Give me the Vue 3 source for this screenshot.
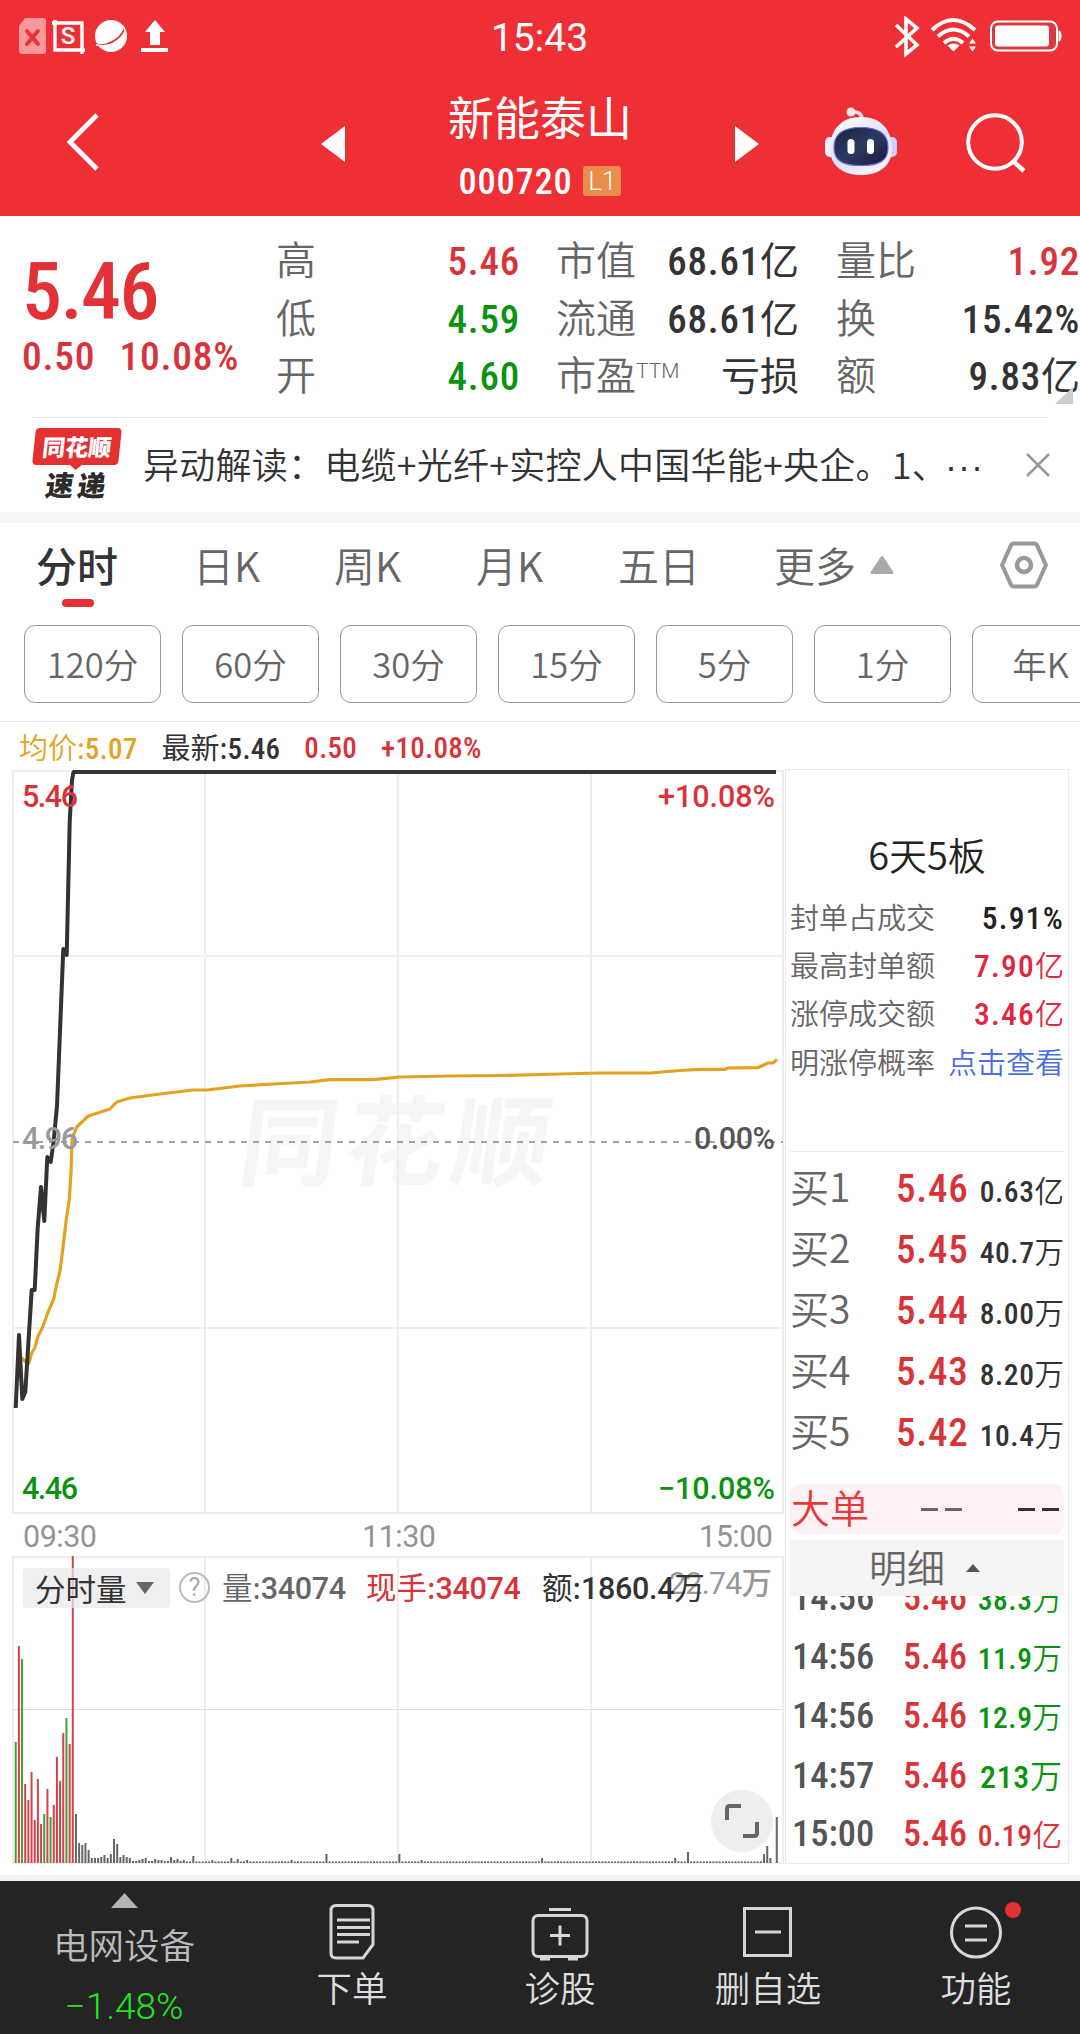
<template>
  <div class="page">
    <header class="header">
      <div class="status-bar">
        <svg class="status-left" width="160" height="44" viewBox="0 0 160 44">
          <path d="M8 2h18a3 3 0 0 1 3 3v30a3 3 0 0 1-3 3H5a3 3 0 0 1-3-3V10z" fill="#f9989b" />
          <path d="M10 15l11 13M21 15L10 28" stroke="#ec3138" stroke-width="4" stroke-linecap="round" />
          <path d="M35 7h30v31M38 4v30h30" fill="none" stroke="#fff" stroke-width="3.400" />
          <text x="51" y="28" class="status-s">S</text>
          <circle cx="94" cy="20" r="16" fill="#fff" />
          <path d="M79 28c7 4 24-3 29-16" fill="none" stroke="#ef2f36" stroke-width="2" />
          <path d="M106 10q4 4-1 11-8 11-26 8" fill="none" stroke="#fff" stroke-width="1.400" />
          <path d="M138 4l10 12h-5v13h-10V16h-5z" fill="#fff" />
          <path d="M124 34h27" stroke="#fff" stroke-width="4" />
        </svg>
        <span class="clock">15:43</span>
        <svg class="status-right" width="172" height="44" viewBox="0 0 172 44">
          <path d="M6 9l21 20-11 9V3l11 9L6 31" fill="none" stroke="#fff" stroke-width="3.600" />
          <g fill="none" stroke="#fff" stroke-width="4">
            <path d="M42 14q21-20 43 0" />
            <path d="M48 20.500q15.500-14 31 0" />
            <path d="M54 27q9.500-8.500 19 0" />
          </g>
          <path d="M57.500 29.500q6-4 12 0l-6 6z" fill="#fff" />
          <path d="M79 27.500l3.500-5 3.500 5zM79 30.500l3.500 5 3.500-5z" fill="#fff" />
          <rect x="101" y="5.500" width="66" height="29" rx="7" fill="#d83a41" stroke="#fff" stroke-width="2" />
          <rect x="105" y="9.500" width="54" height="21" rx="3" fill="#fff" />
          <path d="M168.500 14q3 1 3 6t-3 6z" fill="#fff" />
        </svg>
      </div>
      <div class="title-bar">
        <svg class="icon-back" width="34" height="60" viewBox="0 0 34 60">
          <path d="M31 3L4 30l27 27" fill="none" stroke="#fff" stroke-width="4.800" />
        </svg>
        <svg class="icon-prev" width="24" height="36" viewBox="0 0 24 36"><path d="M24 0v36L0 18z" fill="#fff" /></svg>
        <div class="stock">
          <h1 class="stock-name">新能泰山</h1>
          <div class="stock-code">
            <span class="num">000720</span>
            <span class="level">L1</span>
          </div>
        </div>
        <svg class="icon-next" width="24" height="36" viewBox="0 0 24 36"><path d="M0 0v36l24-18z" fill="#fff" /></svg>
        <svg class="icon-robot" width="74" height="70" viewBox="0 0 74 70">
          <defs>
            <linearGradient id="shell" x1="0" y1="0" x2=".6" y2="1">
              <stop offset="0" stop-color="#fff" />
              <stop offset=".6" stop-color="#dde0fa" />
              <stop offset="1" stop-color="#f6f2fb" />
            </linearGradient>
            <linearGradient id="visor" x1="0" y1="0" x2="1" y2="1">
              <stop offset="0" stop-color="#1a2140" />
              <stop offset=".5" stop-color="#2c3a62" />
              <stop offset="1" stop-color="#171c3a" />
            </linearGradient>
          </defs>
          <path d="M26 6q12-2 12 8" fill="none" stroke="#f3dff0" stroke-width="3.500" />
          <circle cx="27" cy="6" r="4.500" fill="#fbe3ea" />
          <rect x="1" y="31" width="12" height="20" rx="5" fill="#f4f1fd" />
          <rect x="61" y="31" width="12" height="20" rx="5" fill="#ccd0fa" />
          <path d="M37 11c20 0 31 13 31 32 0 16-12 26-31 26S6 59 6 43c0-19 11-32 31-32z" fill="url(#shell)" />
          <path d="M37 21.500c18 0 27 6 27 20 0 13-8 18-27 18s-27-5-27-18c0-14 9-20 27-20z" fill="url(#visor)" stroke="#7165d8" stroke-width="1.200" />
          <rect x="23.500" y="33" width="7" height="15" rx="3.500" fill="#fff" />
          <rect x="43" y="33" width="7" height="15" rx="3.500" fill="#fff" />
        </svg>
        <svg class="icon-search" width="62" height="64" viewBox="0 0 62 64">
          <circle cx="30" cy="31" r="26.800" fill="none" stroke="#fff" stroke-width="4" />
          <path d="M48 50l11 10" stroke="#fff" stroke-width="4.500" />
        </svg>
      </div>
    </header>

    <section class="quote">
      <div class="quote-main">
        <div class="price num">5.46</div>
        <div class="change num"><span>0.50</span><span>10.08%</span></div>
      </div>
      <div v-for="(col, i) in quoteCols" :key="i" class="quote-col" :class="'col-' + i">
        <div v-for="row in col" :key="row.label" class="quote-row">
          <span class="quote-label">{{ row.label }}<sup v-if="row.sup">{{ row.sup }}</sup></span>
          <span class="quote-value" :class="row.color"><b class="num">{{ row.value }}</b>{{ row.unit }}</span>
        </div>
      </div>
      <i class="corner"></i>
    </section>

    <section class="news">
      <div class="news-logo">
        <div class="logo-top"><span>同花顺</span></div>
        <div class="logo-bottom">速递</div>
      </div>
      <p class="news-text">异动解读：电缆+光纤+实控人中国华能+央企。1、<span class="dots">···</span></p>
      <svg class="news-close" width="24" height="24" viewBox="0 0 24 24">
        <path d="M1 1l22 22M23 1L1 23" stroke="#999" stroke-width="2.500" />
      </svg>
    </section>

    <nav class="tabs">
      <div v-for="(tab, i) in tabs" :key="tab" class="tab" :class="['tab-' + i, { active: i === activeTab }]">{{ tab }}</div>
      <svg class="more-arrow" width="24" height="20" viewBox="0 0 24 20"><path d="M12 2.500L22 17.500H2z" fill="#aaa" stroke="#aaa" stroke-width="3" stroke-linejoin="round" /></svg>
      <svg class="icon-setting" width="50" height="50" viewBox="0 0 50 50">
        <path d="M14.500 3.500h21q1.500 0 2.300 1.300L46.500 24q.7 1 0 2L37.800 45.200q-.8 1.300-2.300 1.300h-21q-1.500 0-2.300-1.300L3.500 26q-.7-1 0-2L12.200 4.800q.8-1.300 2.300-1.300z" fill="none" stroke="#999" stroke-width="4" />
        <circle cx="25" cy="25" r="7" fill="none" stroke="#999" stroke-width="4.500" />
      </svg>
    </nav>

    <div class="periods">
      <div v-for="p in periods" :key="p" class="period">{{ p }}</div>
    </div>

    <main class="body">
      <div class="chart">
        <div class="chart-info">
          <span class="avg">均价:<b class="num">5.07</b></span>
          <span class="last">最新:<b class="num">5.46</b></span>
          <b class="num red">0.50</b>
          <b class="num red">+10.08%</b>
        </div>
        <div class="chart-area">
          <svg class="chart-svg" width="785" height="1095" viewBox="0 769 785 1095">
            <g transform="translate(240 1178) skewX(-8)">
              <text x="-4" y="0" class="watermark" textLength="310">同花顺</text>
            </g>
            <g fill="none" stroke="#eee" stroke-width="2">
              <path d="M13 771H783V1513H13zM13 1557H783V1863H13z" />
              <path v-for="x in [205, 398, 591]" :key="x" :d="`M${x} 771V1513M${x} 1557V1863`" />
              <path d="M13 956H783M13 1328H783" />
            </g>
            <path d="M13 1709.500H783" stroke="#ddd" />
            <path d="M13 1142H783" stroke="#888" stroke-width="1.600" stroke-dasharray="6 6" />
            <polyline :points="avgLine" fill="none" stroke="#e2a322" stroke-width="3.200" stroke-linejoin="round" />
            <polyline :points="priceLine" fill="none" stroke="#333" stroke-width="4" stroke-linejoin="round" />
            <rect
              v-for="(bar, i) in bars"
              :key="i"
              :x="14.700 + i * 3.171"
              :y="1863 - bar.h"
              width="2"
              :height="bar.h"
              :fill="bar.color"
            />
            <g class="axis">
              <text x="22" y="806.500" textLength="56" fill="#d93339">5.46</text>
              <text x="658" y="806.500" textLength="117" fill="#d93339">+10.08%</text>
              <text x="22" y="1148.500" textLength="56" fill="#999">4.96</text>
              <text x="694" y="1148.500" textLength="81" fill="#555">0.00%</text>
              <text x="22" y="1498.500" textLength="56" fill="#0a930f">4.46</text>
              <text x="658" y="1498.500" textLength="117" fill="#0a930f">−10.08%</text>
            </g>
            <g class="axis time" fill="#949494">
              <text x="23" y="1546.500" textLength="74">09:30</text>
              <text x="362" y="1546.500" textLength="74">11:30</text>
              <text x="699" y="1546.500" textLength="74">15:00</text>
            </g>
            <text x="669" y="1594" class="axis time" fill="#999" textLength="103">22.74万</text>
          </svg>
          <div class="volume-head">
            <div class="volume-type">
              分时量
              <svg width="18" height="12" viewBox="0 0 18 12"><path d="M0 0h18L9 12z" fill="#666" /></svg>
            </div>
            <div class="help">?</div>
            <span class="vol">量:<b class="num">34074</b></span>
            <span class="hand">现手:<b class="num">34074</b></span>
            <span class="amount">额:<b class="num">1860.4</b>万</span>
          </div>
          <div class="expand">
            <svg width="34" height="34" viewBox="0 0 34 34">
              <path d="M2 16V5q0-3 3-3h11M32 18v11q0 3-3 3H18" fill="none" stroke="#666" stroke-width="4" />
            </svg>
          </div>
        </div>
      </div>

      <aside class="side">
        <div class="board">
          <div class="board-title">6天5板</div>
          <div v-for="row in boardRows" :key="row.label" class="board-row">
            <span>{{ row.label }}</span>
            <span class="board-value" :class="row.color"><b class="num">{{ row.value }}</b>{{ row.unit }}</span>
          </div>
        </div>
        <div class="bids">
          <div v-for="bid in bids" :key="bid.label" class="bid">
            <span class="bid-label">{{ bid.label }}</span>
            <span class="bid-price num">{{ bid.price }}</span>
            <span class="bid-vol"><b class="num">{{ bid.vol }}</b>{{ bid.unit }}</span>
          </div>
        </div>
        <div class="big-order">
          <span>大单</span>
          <i class="dash"></i>
          <i class="dash dark"></i>
        </div>
        <div class="detail">
          <span>明细</span>
          <svg width="14" height="8" viewBox="0 0 14 8"><path d="M7 0l7 8H0z" fill="#555" /></svg>
        </div>
        <div class="ticks">
          <div v-for="(t, i) in ticks" :key="i" class="tick">
            <span class="tick-time num">{{ t.time }}</span>
            <span class="tick-price num">5.46</span>
            <span class="tick-vol" :class="[t.color, { large: t.vol.length < 4 }]"><b class="num">{{ t.vol }}</b>{{ t.unit }}</span>
          </div>
        </div>
      </aside>
    </main>

    <footer class="bottom">
      <div class="sector">
        <svg width="27" height="15" viewBox="0 0 27 15"><path d="M13.500 0L27 15H0z" fill="#b3b3b3" /></svg>
        <div class="sector-name">电网设备</div>
        <div class="sector-change">−1.48%</div>
      </div>
      <div class="action">
        <svg width="60" height="60" viewBox="0 0 60 60" fill="none" stroke="#d6d6d6" stroke-width="3">
          <path d="M12 4.500h32q5 0 5 5v34L39 57H12q-5 0-5-5V9.500q0-5 5-5z" transform="translate(2 0)" />
          <path d="M15 19h33M15 26.500h33M15 33.500h33M15 41h22" />
        </svg>
        <span>下单</span>
      </div>
      <div class="action">
        <svg width="60" height="60" viewBox="0 0 60 60" fill="none" stroke="#d6d6d6" stroke-width="3">
          <rect x="3" y="14.500" width="54" height="41" rx="5" />
          <path d="M19 8.500h22M20 34.500h20M30 24.500v20M10 58h10M38 58h10" />
        </svg>
        <span>诊股</span>
      </div>
      <div class="action">
        <svg width="60" height="60" viewBox="0 0 60 60" fill="none" stroke="#d6d6d6" stroke-width="3">
          <path d="M6.500 7.500h46v47h-46zM17 31h26" />
        </svg>
        <span>删自选</span>
      </div>
      <div class="action">
        <svg width="60" height="60" viewBox="0 0 60 60" fill="none" stroke="#d6d6d6" stroke-width="3">
          <circle cx="30" cy="31.500" r="24.500" />
          <path d="M19 25h22M19 39h22" />
        </svg>
        <span>功能</span>
        <i class="dot"></i>
      </div>
    </footer>
  </div>
</template>

<script setup>
import { ref } from "vue";

const activeTab = ref(0);
const tabs = ["分时", "日K", "周K", "月K", "五日", "更多"];
const periods = ["120分", "60分", "30分", "15分", "5分", "1分", "年K"];

const quoteCols = [
  [
    { label: "高", value: "5.46", color: "red" },
    { label: "低", value: "4.59", color: "green" },
    { label: "开", value: "4.60", color: "green" },
  ],
  [
    { label: "市值", value: "68.61", unit: "亿" },
    { label: "流通", value: "68.61", unit: "亿" },
    { label: "市盈", sup: "TTM", unit: "亏损" },
  ],
  [
    { label: "量比", value: "1.92", color: "red" },
    { label: "换", value: "15.42%" },
    { label: "额", value: "9.83", unit: "亿" },
  ],
];

const boardRows = [
  { label: "封单占成交", value: "5.91%" },
  { label: "最高封单额", value: "7.90", unit: "亿", color: "rose" },
  { label: "涨停成交额", value: "3.46", unit: "亿", color: "rose" },
  { label: "明涨停概率", unit: "点击查看", color: "link" },
];

const bids = [
  { label: "买1", price: "5.46", vol: "0.63", unit: "亿" },
  { label: "买2", price: "5.45", vol: "40.7", unit: "万" },
  { label: "买3", price: "5.44", vol: "8.00", unit: "万" },
  { label: "买4", price: "5.43", vol: "8.20", unit: "万" },
  { label: "买5", price: "5.42", vol: "10.4", unit: "万" },
];

const ticks = [
  { time: "14:56", vol: "38.3", unit: "万", color: "green" },
  { time: "14:56", vol: "11.9", unit: "万", color: "green" },
  { time: "14:56", vol: "12.9", unit: "万", color: "green" },
  { time: "14:57", vol: "213", unit: "万", color: "green" },
  { time: "15:00", vol: "0.19", unit: "亿", color: "red" },
];

const priceLine =
  "15.7,1408 19,1335 22.3,1399 25.3,1392 31.7,1290 34.7,1290 37.7,1228 41,1187 44.3,1221 47.3,1157 50.7,1162 53.7,1141 57,1106 63.3,949 66.7,955 69.7,822 72,780 73.5,772 776,772";

const avgLine =
  "21.7,1358 26.7,1363 29,1363 31.7,1353 34.7,1348 37.7,1337 42.7,1327 47.3,1314 53.7,1299 56.7,1284 60,1271 63.3,1245 66.3,1219 69.3,1200 71,1172 72,1139 76.7,1127 88.3,1116 110,1109 116.7,1102 130,1098 160,1094 193,1090 207,1090 240,1086 273,1084 310,1082 330,1079.7 373,1079.7 400,1077 450,1076 500,1075.5 560,1074 600,1073 650,1073 680,1070.5 700,1069.3 725,1069.3 728,1068 758,1067.7 768,1063 773,1063 777,1059.3";

// Opening minutes: height and direction of each volume bar
const opening = [
  [121, "g"], [217, "r"], [204, "g"], [79, "r"], [63, "r"], [91, "r"], [43, "r"],
  [84, "r"], [39, "r"], [49, "g"], [74, "r"], [46, "g"], [58, "r"], [106, "r"],
  [82, "r"], [130, "r"], [145, "g"], [119, "r"], [307, "r"],
];
const afterLimit = [49, 20, 18, 20, 13, 5, 5, 5, 6, 8, 5, 9, 24, 19, 6, 8, 6, 5, 2, 2, 3, 4, 5, 2, 2, 4, 3, 3, 2, 2, 6, 3, 4, 2, 3];
const spikes = { 56: 7, 62: 3, 68: 5, 70: 4, 73: 3, 87: 3, 98: 9, 121: 9, 128: 3, 166: 5, 208: 5, 212: 11, 236: 9, 237: 17, 238: 5, 239: 0, 240: 46 };

const palette = { r: "#d0454a", g: "#4b9b38" };
const bars = Array.from({ length: 241 }, (_, i) => {
  if (i < opening.length) {
    return { h: opening[i][0], color: palette[opening[i][1]] };
  }
  const h = spikes[i] ?? afterLimit[i - opening.length] ?? 1.6;
  return { h, color: "#666" };
});
</script>

<style>
body {
  background: #fff;
}
</style>

<style scoped>
.page {
  width: 1080px;
  height: 2034px;
  overflow: hidden;
  font-family: "Noto Sans CJK SC", sans-serif;
  font-weight: 350;
  color: #333;
  background: #fff;
}

i {
  font-style: normal;
}

svg {
  display: block;
  flex: none;
}

.num {
  font-family: Roboto, sans-serif;
  font-weight: 500;
  font-stretch: 75%;
  letter-spacing: 0.02em;
}

.red {
  color: #d93339;
}

.green {
  color: #0a930f;
}

/* header */
.header {
  height: 216px;
  background: #ef2f36;
  color: #fff;
}

.status-bar {
  display: grid;
  grid-template-columns: 1fr auto 1fr;
  height: 76px;
  padding: 16px 18px 0 17px;
  box-sizing: border-box;
}

.status-right {
  justify-self: end;
}

.status-s {
  font: 500 24px Roboto, sans-serif;
  fill: #fff;
  text-anchor: middle;
}

.clock {
  font: 400 39px/44px Roboto, sans-serif;
}

.title-bar {
  display: flex;
  height: 140px;
}

.icon-back {
  margin: 36px 0 0 66px;
}

.icon-prev {
  margin: 50px 0 0 221px;
}

.stock {
  width: 390px;
  text-align: center;
}

.stock-name {
  margin: 12px 0 0;
  font-size: 46px;
  line-height: 54px;
  font-weight: 400;
}

.stock-code {
  display: flex;
  justify-content: center;
  align-items: center;
  gap: 11px;
  margin-top: 19px;
  height: 40px;
  font-size: 36.500px;
}

.level {
  width: 38px;
  height: 30px;
  font: 300 26px/31px Roboto, sans-serif;
  background: #e98d4b;
  border-radius: 3px;
}

.icon-next {
  margin: 50px 0 0;
}

.icon-robot {
  margin: 30px 0 0 65px;
}

.icon-search {
  margin: 35px 0 0 67px;
}

/* quote */
.quote {
  position: relative;
  display: flex;
  height: 201px;
  padding-top: 16px;
  box-sizing: border-box;
}

.quote-main {
  width: 276px;
  padding-left: 22px;
  box-sizing: border-box;
  color: #e33237;
}

.price {
  margin-top: 20px;
  font-size: 80px;
  line-height: 80px;
  letter-spacing: -0.02em;
}

.change {
  display: flex;
  gap: 24px;
  font-size: 39.500px;
  line-height: 50px;
  color: #d93339;
}

.quote-col {
  height: 174px;
}

.col-0 {
  width: 244px;
}

.col-1 {
  width: 243px;
  margin-left: 36px;
}

.col-2 {
  width: 244px;
  margin-left: 37px;
}

.quote-row {
  display: flex;
  justify-content: space-between;
  height: 57.500px;
  line-height: 52px;
  font-size: 40px;
}

.quote-label {
  color: #666;
  white-space: nowrap;
}

.quote-value {
  font-size: 39px;
  line-height: 52px;
  font-weight: 400;
}

.quote-label sup {
  font: 300 21px/1 Roboto, sans-serif;
  vertical-align: 12px;
}

.corner {
  position: absolute;
  right: 7px;
  bottom: 13px;
  border-style: solid;
  border-width: 0 0 17px 18px;
  border-color: transparent transparent #ccc transparent;
}

/* news */
.news {
  display: flex;
  height: 106px;
  border-bottom: 11px solid #f7f5f6;
  background: linear-gradient(#ececec, #ececec) 32px 0 / 1016px 1px no-repeat;
  box-sizing: border-box;
}

.news-logo {
  width: 86px;
  margin: 11px 0 0 34px;
  text-align: center;
}

.logo-top {
  height: 37px;
  background: #e53032;
  color: #fff;
  border-radius: 4px;
  transform: skewX(-6deg);
  font-size: 23px;
  line-height: 36px;
  font-weight: 900;
}

.logo-top::after {
  content: "";
  position: absolute;
  left: 37px;
  top: 36px;
  border: solid transparent;
  border-width: 6px 7px 0;
  border-top-color: #e53032;
}

.logo-bottom {
  padding-left: 2px;
  font-size: 28px;
  line-height: 38px;
  letter-spacing: 4px;
  font-weight: 900;
  color: #2b2b2b;
  transform: skewX(-8deg);
}

.news-text {
  width: 861px;
  margin: 0 0 0 23px;
  font-size: 36px;
  line-height: 93px;
  letter-spacing: 0.250px;
  white-space: nowrap;
}

.dots {
  margin-left: 15px;
  font-family: "Liberation Sans", sans-serif;
  letter-spacing: 1px;
}

.news-close {
  margin: 36px 0 0 22px;
}

/* tabs */
.tabs {
  display: flex;
  height: 102px;
  font-size: 41px;
  line-height: 82px;
  color: #666;
}

.tab {
  position: relative;
  flex: none;
  box-sizing: border-box;
  white-space: nowrap;
}

.tab-0 {
  width: 193px;
  padding-left: 36px;
}

.tab-1 {
  width: 141px;
}

.tab-2 {
  width: 142px;
}

.tab-3 {
  width: 142px;
}

.tab-4 {
  width: 156px;
}

.tab-5 {
  width: 82px;
}

.tab.active {
  color: #333;
  font-weight: 500;
}

.tab.active::after {
  content: "";
  position: absolute;
  left: 62px;
  top: 76px;
  width: 32px;
  height: 8px;
  border-radius: 4px;
  background: #e53032;
}

.more-arrow {
  margin: 32px 0 0 14px;
}

.icon-setting {
  margin: 17px 0 0 105px;
}

.periods {
  display: flex;
  gap: 21px;
  height: 97px;
  padding-left: 24px;
  overflow: hidden;
  border-bottom: 1px solid #e6e6e6;
  box-sizing: border-box;
}

.period {
  flex: none;
  width: 137px;
  height: 78px;
  border: 1px solid #999;
  border-radius: 11px;
  box-sizing: border-box;
  text-align: center;
  font-size: 34.500px;
  line-height: 75px;
  color: #666;
}

/* chart */
.body {
  display: flex;
  height: 1153px;
}

.chart {
  width: 785px;
}

.chart-info {
  display: flex;
  gap: 24px;
  height: 47px;
  padding-left: 19px;
  font-size: 29px;
  line-height: 48px;
  white-space: nowrap;
}

.chart-info .num {
  letter-spacing: 0.01em;
}

.chart-info > b {
  line-height: 52px;
}

.avg {
  color: #e2a322;
}

.last {
  font-weight: 400;
}

.chart-area {
  position: relative;
}

.watermark {
  font-size: 98px;
  font-weight: 700;
  fill: #f6f6f6;
}

.axis {
  font: 500 30.500px Roboto, "Noto Sans CJK SC", sans-serif;
}

.time {
  font-weight: 450;
}

.volume-head {
  position: absolute;
  left: 23px;
  top: 798px;
  display: flex;
  align-items: center;
  height: 41px;
  font-size: 30.500px;
  line-height: 40px;
  white-space: nowrap;
}

.volume-head .num {
  font-stretch: 100%;
  letter-spacing: -0.01em;
}

.volume-type {
  display: flex;
  align-items: center;
  gap: 9px;
  width: 147px;
  padding-left: 12px;
  box-sizing: border-box;
  border-radius: 4px;
  background: rgba(232, 232, 232, 0.7);
  font-weight: 400;
}

.help {
  width: 27px;
  height: 27px;
  margin: 0 12px 0 9px;
  border: 2px solid #bbb;
  border-radius: 50%;
  text-align: center;
  font: 400 25px/28px Roboto, sans-serif;
  color: #aaa;
}

.vol {
  width: 144px;
  color: #666;
}

.hand {
  width: 176px;
  color: #d93339;
  font-weight: 400;
}

.amount {
  font-weight: 400;
}

.expand {
  position: absolute;
  left: 711px;
  top: 1021px;
  display: flex;
  align-items: center;
  justify-content: center;
  width: 62px;
  height: 62px;
  border-radius: 50%;
  background: #efedee;
}

/* right panel */
.side {
  width: 284px;
  height: 1095px;
  margin-top: 47px;
  border: 1px solid #ebebeb;
  box-sizing: border-box;
  padding: 0 4px 0 4px;
}

.board {
  height: 382px;
  padding: 58px 0 0 0;
  box-sizing: border-box;
  border-bottom: 1px solid #ececec;
}

.board-title {
  text-align: center;
  font-size: 38px;
  line-height: 52px;
  margin-bottom: 12px;
  color: #222;
}

.board-row {
  display: flex;
  justify-content: space-between;
  font-size: 29px;
  line-height: 48px;
  height: 48.200px;
  color: #666;
}

.board-value {
  color: #222;
}

.board-value .num {
  font-size: 31.500px;
  letter-spacing: 0.040em;
}

.board-value.rose {
  color: #e2263f;
}

.board-value.link {
  color: #4a6fe0;
}

.bids {
  height: 332px;
  padding-top: 3px;
  box-sizing: border-box;
}

.bid {
  display: flex;
  align-items: baseline;
  height: 61px;
  line-height: 61px;
}

.bid-label {
  width: 106px;
  font-size: 39px;
  color: #666;
}

.bid-price {
  width: 72px;
  font-size: 39px;
  color: #d93339;
}

.bid-vol {
  flex: 1;
  text-align: right;
  font-size: 29.500px;
}

.big-order {
  display: flex;
  align-items: center;
  height: 50px;
  padding-left: 1px;
  border-radius: 10px;
  background: #fef1f3;
  font-size: 39px;
  line-height: 46px;
  color: #e8393a;
}

.big-order span {
  margin-top: -6px;
}

.dash {
  width: 41px;
  height: 3px;
  margin-left: 52px;
  background: linear-gradient(90deg, #666 17px, transparent 17px, transparent 24px, #666 24px);
}

.dash.dark {
  margin-left: 56px;
  background: linear-gradient(90deg, #333 17px, transparent 17px, transparent 24px, #333 24px);
}

.detail {
  display: flex;
  align-items: center;
  gap: 21px;
  height: 56px;
  margin-top: 6px;
  padding-left: 79px;
  background: #f5f3f4;
  font-size: 38px;
  line-height: 56px;
  color: #666;
}

.detail span {
  margin-top: -4px;
}

.ticks {
  display: flex;
  flex-direction: column;
  justify-content: flex-end;
  height: 267px;
  overflow: hidden;
}

.tick {
  display: flex;
  flex: none;
  align-items: baseline;
  height: 59px;
  padding: 0 2px 0 2px;
  line-height: 59px;
}

.tick-time {
  width: 111px;
  font-size: 36.500px;
  letter-spacing: 0;
  color: #555;
}

.tick-price {
  width: 64px;
  font-size: 36px;
  letter-spacing: 0;
  color: #d93339;
}

.tick-vol {
  flex: 1;
  text-align: right;
  font-size: 29.500px;
}

.tick-vol.large {
  font-size: 32px;
}

/* bottom bar */
.bottom {
  display: flex;
  height: 159px;
  border-top: 6px solid #f3f3f3;
  box-sizing: border-box;
  background: #242424;
  color: #ddd;
  font-size: 35.500px;
}

.sector {
  display: flex;
  flex-direction: column;
  align-items: center;
  width: 248px;
  padding-top: 12px;
  box-sizing: border-box;
}

.sector-name {
  margin-top: 11px;
  line-height: 50px;
  color: #bbb;
}

.sector-change {
  margin-top: 16px;
  font: 350 37px/44px Roboto, sans-serif;
  color: #1fe81f;
}

.action {
  position: relative;
  display: flex;
  flex-direction: column;
  align-items: center;
  width: 208px;
  padding-top: 20px;
  box-sizing: border-box;
}

.action span {
  line-height: 51px;
}

.dot {
  position: absolute;
  left: 133px;
  top: 21px;
  width: 16px;
  height: 16px;
  border-radius: 50%;
  background: #e53032;
}
</style>
